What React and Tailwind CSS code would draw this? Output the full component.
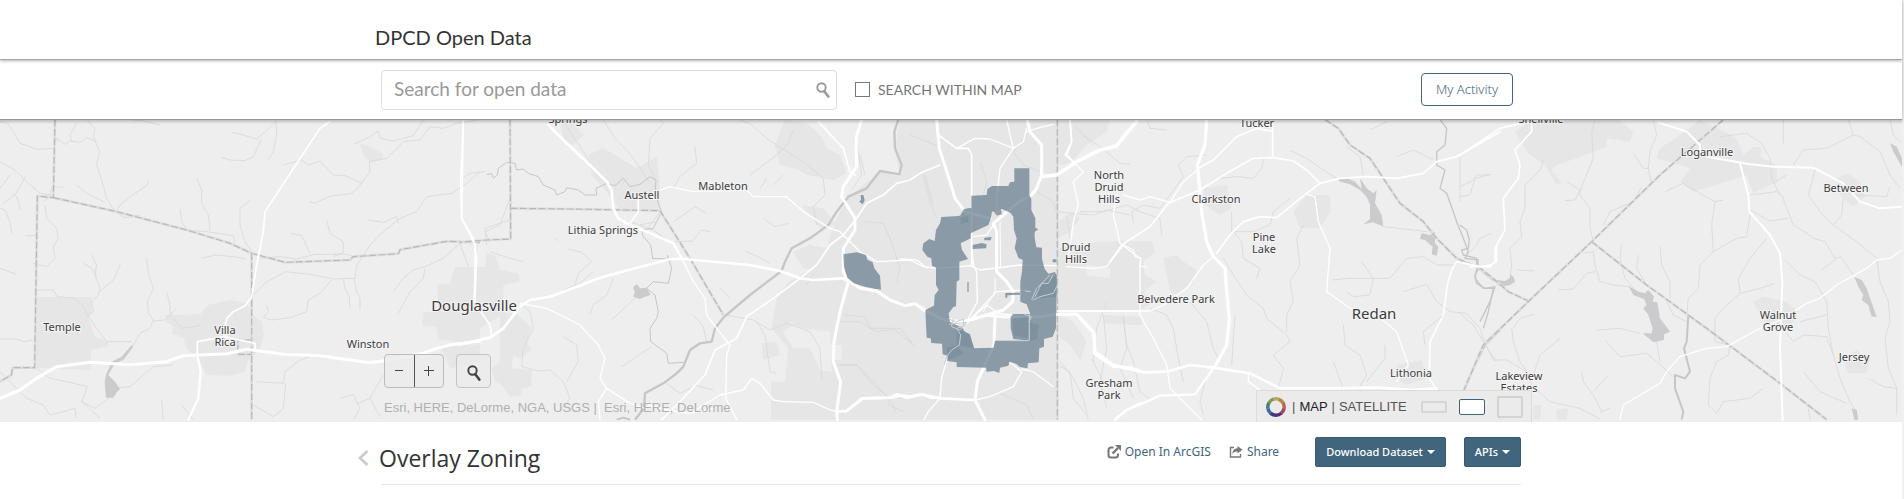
import React from "react";

const URBAN = "#e6e6e6";

/* Each sheet of the base map is drawn on a grid of thirds of a pixel, starting at x. */
const sheets = [
  {
    x: 0,
    urban: [
      "112,546 275,546 275,590 265,610 285,665 325,680 325,695 272,705 272,765 108,758",
      "495,600 600,598 625,570 690,555 740,565 760,600 785,620 792,660 780,700 740,745 735,770 690,782 620,780 600,740 560,700 550,670 515,655 520,635 500,620",
      "1365,456 1440,456 1440,690 1315,672 1308,635 1268,632 1268,592 1315,588 1312,508 1350,505",
      "1078,85 1110,95 1150,118 1145,135 1110,142 1090,120",
      "1320,690 1440,690 1440,740 1350,760",
    ],
    streams: [
      "0,20 20,22 40,50 60,85 90,95 110,103 160,100 170,70 195,88 210,78 240,82 260,68 290,80",
      "260,14 285,40 280,65 298,110 290,150 305,195 320,250 345,290 375,308 420,300",
      "350,285 365,265 405,235 440,212 445,195", "230,210 260,235 315,262", "215,80 210,60 230,25",
      "0,140 40,162 60,180 85,205 120,235 150,240", "0,220 30,180", "0,280 15,285 30,320 35,355", "35,235 50,245 62,285", "75,185 60,215 45,240 10,265",
      "390,14 430,18 480,30", "695,52 730,60 770,72 790,55 830,18", "665,128 690,135 735,137 760,125 785,72", "805,135 820,110 830,60 828,14",
      "850,150 905,135 925,150 960,138 1000,180 1035,182 1085,205 1110,170 1108,140 1160,130 1210,80 1260,75 1290,35 1330,40 1370,25 1440,14",
      "930,260 945,265 985,245 1055,235 1085,205", "1060,88 1105,68 1135,48 1140,70 1180,78 1240,62 1270,14", "1440,170 1400,205 1355,235 1280,245 1250,290 1200,310 1150,350 1110,390 1095,415",
      "1105,315 1150,322 1190,305 1195,325", "980,315 990,355 1030,380 1030,412 1000,425", "870,355 905,362 930,415",
      "590,190 605,225 605,265 625,300 630,345", "540,282 545,320 560,345 620,350 700,362 705,385", "750,255 720,280 720,330 735,380 755,410", "605,430 645,420 700,425 740,432",
      "135,270 140,310 170,340 175,370 160,395 165,430 140,455 100,445", "130,260 150,245 155,215 190,217", "75,362 110,362", "0,460 50,478",
      "105,525 160,525 172,545 225,550 250,575 265,605 290,640 320,680 395,680", "275,420 290,450 285,480 300,520 295,540 275,560 280,590 260,605", "300,530 340,495 362,445", "250,445 275,460 290,485",
      "440,430 445,475 460,520 442,560 445,595 460,615 450,640 420,655 400,690", "460,618 495,615 530,580", "500,530 510,570 510,600 545,640 600,632",
      "760,540 800,500 830,485 855,470 930,478 1000,492 1065,490 1070,450 1095,415", "995,495 960,535 925,555 920,590 870,608 815,615 790,608 805,590 800,570", "1030,492 1035,520 1048,545 1050,580", "1062,490 1070,530 1080,550 1080,583",
      "1180,530 1210,490 1240,465 1275,455 1330,430 1380,385 1405,455", "1275,460 1270,490 1230,530 1195,595", "780,430 840,425 890,432 945,418 1040,418 1060,425",
      "0,672 50,672 70,680 100,675", "0,770 40,810 80,850 130,870 150,900 190,890 225,880 228,910", "110,760 150,790 200,800 262,815 245,860 285,880 325,850 340,800", "355,818 390,815 430,780 460,755 520,750", "245,860 300,910",
      "770,800 850,805 855,770 900,735 930,725", "760,870 820,905 850,880 857,805", "485,855 490,914", "545,870 580,914", "1020,850 1060,838 1072,865 1110,850 1150,780", "1060,914 1080,880 1072,865", "1110,850 1140,905",
    ],
    water: ["395,690 400,695 370,735 345,745 325,780 345,800 360,822 350,832 340,848 318,848 314,800 318,780 335,740 365,725"],
    borders: [
      "165,14 160,248 112,243 104,758 38,758 34,780 0,800",
      "160,248 350,290 560,345 690,385 755,415 855,442 1050,435 1060,425 1195,416 1200,404 1340,379 1440,382",
      "755,415 755,700 755,914", "755,675 714,675 714,718 755,718",
    ],
    roads: [
      [5, "990,20 960,40 795,290 790,350 770,450 755,545 735,572 700,590 680,610 672,650 680,668"],
      [5, "592,720 592,680 672,665 765,685 765,705"],
      [9, "0,850 60,825 110,790 170,755 270,742 390,749 500,740 550,722 680,716 740,703 850,718 960,722 1110,743 1170,735 1270,715 1310,700 1350,690 1440,678"],
      [7, "592,720 602,770 595,850 565,914"],
      [5, "1390,14 1382,200 1385,310 1420,370 1430,430 1425,560"],
    ],
  },
  {
    x: 460,
    urban: [
      "0,456 75,456 80,415 105,420 120,465 175,475 180,500 130,510 130,560 140,590 60,640 0,650",
      "120,590 175,600 215,640 200,680 215,705 180,730 160,720 155,760 215,765 215,815 185,820 185,840 150,845 125,810 105,800 95,760 120,740",
      "330,14 370,60 340,90 310,75 300,14", "385,120 430,100 475,125 530,160 590,125 600,215 600,285 480,285 440,230 395,180",
      "945,90 975,14 1040,25 1080,60 1100,100 1140,120 1160,175 1120,195 1040,180 1020,165 960,150",
      "1320,14 1440,14 1440,914 933,914 933,800 975,800 985,700 935,640 950,550 985,500 1060,460 1100,400 1125,320 1165,245 1260,170 1320,185 1305,100",
      "1000,410 1050,390 1110,400 1080,470 1030,460", "1025,270 1090,280 1130,330 1080,340", "905,685 950,680 960,720 910,735",
    ],
    holes: ["1030,640 1110,650 1115,770 1080,765 1050,700 1000,700 970,650 1000,630", "1110,690 1145,690 1145,735 1110,735"],
    streams: [
      "310,20 370,110 390,145", "430,14 465,70 505,110 540,160 570,205", "600,14 610,25 570,70 565,150 590,200", "705,95 710,145 660,185 640,220", "0,195 30,175 75,170",
      "150,250 120,330 75,350 90,380", "285,370 295,378", "325,402 365,412 395,440 355,475 345,510", "310,525 360,505 400,470", "460,490 440,540 400,570 390,598", "455,615 530,545 520,520",
      "635,385 580,345 510,320", "700,375 725,345 750,350", "640,320 705,275 740,295", "645,380 700,378", "175,560 210,590 220,640 190,700 185,755 235,768 270,765 310,800 330,850 300,890",
      "310,665 350,690 355,740 320,800", "485,755 575,695", "700,600 730,635 740,680", "780,520 810,550", "860,410 905,430 930,445", "835,14 870,25 920,70 950,90 980,110 1030,140 1090,190 1095,240 1060,275 1070,330",
      "870,180 950,120 985,85 1000,45", "900,220 920,190", "940,210 970,180", "910,310 945,335 985,325", "1180,70 1195,110 1205,180 1175,225", "1215,320 1270,325 1290,370 1320,460 1310,500",
      "795,600 880,615 930,645 980,625 1050,650 1080,700 1085,790", "890,620 915,660 930,770 950,775", "1150,600 1215,605 1230,640 1300,640 1360,690", "1130,750 1190,750 1240,810 1290,850 1285,870 1330,890", "620,805 660,835 710,812 760,825", "90,410 150,430 190,440", "590,320 540,330 560,345 600,290", "1395,180 1420,270",
      "80,390 75,340 150,315", "1040,510 1060,475",
    ],
    rivers: [
      [3, "80,178 95,176 100,190 112,180 115,160 140,142 165,145 170,165 190,162 205,175 235,185 250,210 285,225 290,240 315,230 320,218 355,225 375,240 410,240 408,220 440,205 465,212 490,190 510,215 540,208 570,185 588,195 585,230 595,265 605,290 580,340 545,345 550,365 572,390 578,430 625,432 622,420 635,460 625,505 580,500 560,520 585,540 595,590 590,610 570,640 572,680 600,700 620,715 625,745 670,742"],
      [7, "1315,14 1303,50 1305,100 1325,150 1318,178 1260,168 1220,220 1165,245 1130,290 1105,330 1050,370 995,400 975,440 965,468 870,540 790,608 765,640 755,680 720,685 690,705 670,755 650,775 610,805 555,835 552,880 525,914", ],
      [6, "470,914 490,908 510,914"],
    ],
    water: ["520,515 530,508 540,520 560,518 572,540 555,545 540,552 520,545 525,530"],
    borders: ["150,14 152,372 80,375 0,382", "152,280 330,282 600,287 690,430 790,600"],
    roads: [
      [5, "10,14 5,310 45,390 45,470 42,560 90,630 95,665"],
      [8, "265,30 310,75 390,150 440,200 455,225 460,280 475,310 510,330 560,350 640,385 665,430"],
      [4, "665,430 700,500 735,550 740,600 770,640 810,690 800,720 797,850 830,914"],
      [8, "0,688 90,668 130,640 180,575 210,555 270,545 430,485 630,432 670,432 870,450 960,468 1020,490 1060,495 1150,490"],
      [4, "600,225 630,215 700,230 860,225 880,245 980,245 1030,290 1110,340 1140,350 1200,410 1250,440 1350,435 1390,455 1440,460"],
      [5, "510,325 535,290 535,245"],
      [4, "180,565 260,580 360,630 415,690 435,730 420,790 440,820 510,865 555,880 570,870 620,885 690,895 760,880"],
      [4, "440,820 415,860 420,914"],
      [5, "605,914 650,870 735,780 765,705 830,670 860,605 940,550 1020,490 1070,450 1110,390 1150,360 1190,310 1220,265 1270,240 1310,205 1350,195 1380,175 1440,150"],
      [4, "690,895 780,840 850,825 875,790 900,805 940,855 970,860 1060,862 1110,885 1130,890"],
      [5, "1075,20 1150,100 1170,170 1185,180"],
      [9, "1205,14 1188,70 1190,155 1150,215 1145,245 1185,310 1185,345 1150,400 1150,470 1165,500 1140,590 1122,680 1120,740 1142,800 1130,890 1132,914"],
      [9, "1150,490 1200,520 1250,528 1290,555 1335,572 1365,566 1400,590"],
      [8, "1130,890 1160,888 1205,850 1290,848 1310,838 1340,848 1390,838 1410,848 1440,848"],
    ],
  },
  {
    x: 840,
    urban: ["300,14 652,14 652,914 300,914", "652,14 810,14 800,50 740,90 700,135 670,150 652,150", "652,400 780,380 900,380 900,588 652,588", "652,320 700,290 720,310 690,350 652,370", "652,600 700,620 740,680 720,735 690,690 652,660"],
    holes: ["740,450 810,460 810,490 740,480"],
    streams: [
      "60,120 75,180", "250,180 270,260 290,310", "210,60 300,95", "560,60 520,110 550,150 600,170", "652,290 700,295 760,300 800,285 870,300", "0,620 60,620 110,650 180,640 220,690", "0,750 50,750 120,820 160,870 165,890", "590,230 640,260 652,300", "680,300 690,370 720,440", "790,600 800,700 780,800 800,880", "850,600 860,700 840,760 880,850", "652,750 690,770 700,850 740,900", "420,140 440,200 430,240", "470,830 560,870 580,914", "700,30 760,90",
    ],
    borders: ["652,14 652,914"],
    roads: [
      [9, "290,14 298,100 330,200 345,250 375,290 450,310"],
      [5, "295,60 350,100 385,100 395,120 395,450"],
      [4, "350,100 405,70 450,72 520,100 550,80 560,40"],
      [4, "500,14 510,60 520,100 480,160 470,250 470,300"],
      [9, "562,14 570,50 605,90 605,180 590,220 575,240 530,265 490,300 460,325 470,350 470,470 500,500 520,530 518,560 490,585 440,600 400,612"],
      [11, "605,185 650,180 710,140 780,105 830,93 855,60 890,20"],
      [4, "560,50 590,40 640,28"], [4, "690,14 695,80 675,120 700,140"], [4, "700,140 730,170 700,200 715,270 700,320 690,400 680,440"],
      [4, "395,390 400,450 410,470 412,560 380,620"], [3, "480,320 482,460"], [4, "400,365 440,360 460,330"],
      [4, "180,432 230,435 260,458 330,458 390,452 420,465 540,450 650,452"], [4, "330,610 380,625 470,530 560,525"], [4, "380,625 440,570 475,595 515,600"],
      [3, "465,490 465,530 430,590"],
      [9, "230,570 255,585 300,610 350,625 400,612 440,600 490,605 600,605 655,598 710,598 760,650 765,710 820,750 860,760 900,770"],
      [4, "652,588 900,588"],
      [9, "465,600 462,690 430,760 412,800 405,855 435,914"],
      [8, "0,888 20,888 70,850 160,848 180,840 210,845 245,838 300,850 400,855"],
      [4, "360,670 320,735 305,790 300,850 265,890 252,914"], [4, "405,855 450,845 520,815 545,770 510,742"], [4, "545,762 580,770 640,815"],
      [7, "825,914 860,885 900,865"], [4, "830,240 820,300 840,385 900,430"], [4, "680,455 760,460 800,455 850,390"],
    ],
  },
  {
    x: 1060,
    urban: ["150,380 275,378 285,410 250,440 255,480 290,500 250,530 280,560 240,588 150,588", "310,430 350,420 370,440 410,465 400,500 350,540 330,530", "700,290 740,240 810,240 812,290 780,340 720,340", "430,220 500,210 515,280 480,300 435,270", "130,600 245,605 245,630 130,625", "1010,750 1085,735 1100,790 1040,810 1010,790", "0,520 150,520 150,588 0,588"],
    streams: [
      "260,14 270,40 320,45", "70,60 120,95 150,120 180,145 210,148", "220,320 215,290 250,270 300,280 330,240 370,185 355,150 380,125 440,120", "60,290 130,290 200,270 240,290 300,310 305,360", "480,190 530,185 580,190 605,160 612,130", "515,290 515,350 580,350 630,330 640,290 690,250",
      "490,430 520,480 560,540 610,580 620,610 680,660 690,680 640,720 670,760 655,820", "520,350 545,380 550,430 600,460 590,490", "730,330 710,370 720,450 690,500 700,560 680,600 680,650", "800,880 850,820 820,740", "850,630 855,690 900,720 920,780 890,830", "920,800 975,730 975,690",
      "815,495 870,490 920,490 990,490 1040,430 1090,425 1130,450 1190,450", "860,530 880,545 930,540 940,490 905,440", "1030,530 1100,508 1130,560 1170,590 1220,595 1260,640 1275,685", "690,105 740,130 790,165 830,190", "860,95 900,125 910,180", "970,335 1060,345 1100,350", "1010,125 1060,105 1120,135",
      "930,45 980,20", "1200,215 1240,195 1250,180 1290,180", "1220,420 1250,390 1260,370 1295,355", "1150,600 1090,650 1095,690", "100,740 110,640 140,560", "190,610 200,690 220,740 240,830 280,860", "270,580 320,600 340,640 355,730 370,800", "390,560 440,620 460,700 480,740", "525,600 515,750", "0,740 40,790 70,850 85,914", "95,730 130,800 120,850", "440,780 420,860 430,900", "1275,690 1310,740",
    ],
    rivers: [[4, "1140,14 1160,40 1155,90 1130,110 1130,150 1155,165 1140,220 1160,235 1180,290 1190,320 1210,370 1225,410 1215,430 1255,435 1245,490 1270,520 1300,520 1285,590 1270,640"]],
    water: [
      "830,190 860,188 885,200 905,222 900,190 920,220 940,235 950,225 945,265 965,300 970,335 940,322 910,328 930,312 930,270 920,245 900,225 870,208 840,200",
      "1085,355 1110,360 1125,350 1125,385 1135,395 1130,422 1115,418 1118,395 1095,375 1080,372", "1305,500 1320,495 1320,515",
    ],
    borders: ["795,14 835,40 870,90 930,130 970,190 1020,265 1090,320 1130,370 1190,430 1250,455 1300,495 1320,505", "1320,645 1275,690 1245,750 1212,825"],
    roads: [
      [10, "440,14 435,90 412,150 425,290 440,380 460,425 495,460 500,530 508,610 500,690 465,755"],
      [8, "0,598 50,598 105,660 102,715 160,755 215,758 250,772 320,770 390,750 460,758 570,775 660,820 800,820 950,818 1060,825 1130,820"],
      [7, "460,760 405,838 300,842 260,860 200,885 165,914"],
      [5, "415,160 460,135 530,65 590,40 640,50"], [5, "638,14 638,128"],
      [5, "150,440 185,390 270,335 325,265 420,225 500,175 580,130 640,128 700,138 740,165 780,205"],
      [4, "190,240 240,255 270,245 330,262 370,200 412,165"],
      [5, "470,415 510,360 550,320 600,305 650,308 720,250 780,205 840,190 920,185 1010,190 1090,175 1130,140 1190,125 1320,50"],
      [4, "740,238 765,245 775,320 810,400 800,530 870,580 950,600 1010,650 1045,750 1010,800"],
      [4, "455,430 430,450 380,520 310,570 270,588 0,588"], [4, "240,440 240,600 280,670 320,750 330,820 370,860 425,914"], [4, "190,390 220,405 225,425 243,430 240,455 258,455"],
      [5, "1260,455 1190,440 1175,465 1162,510 1150,600 1110,680 1108,790 1130,825"], [4, "1190,440 1260,455 1290,450 1310,440 1310,390 1320,370"],
      [4, "565,778 565,800 600,825"], [5, "30,14 35,80 20,120 40,140"],
    ],
  },
  {
    x: 1460,
    urban: ["165,50 215,14 475,14 520,50 510,80 440,70 440,95 350,130 290,150 275,165 305,205 290,210 255,150 205,115", "600,100 660,60 720,14 775,40 830,70 850,120 880,95 905,100 900,125 950,150 950,200 880,235 860,180 750,215 700,230 660,200 690,160 590,130", "1130,190 1160,175 1200,200 1215,245 1180,275 1140,240", "880,560 910,545 980,560 1015,590 1000,620 960,645 910,620", "1150,730 1190,705 1230,735 1220,775 1165,775", "220,870 245,870 240,914 220,914", "290,885 325,880 320,914 290,914"],
    streams: [
      "405,14 395,50 400,130 365,215 360,240 390,280 390,340 400,380", "315,257 345,255 360,225 320,200", "580,14 590,60 570,110 565,160 575,210", "520,115 550,160 565,160", "430,330 450,290 520,260 545,215", "250,135 240,165 195,210 195,280 180,320 185,365 150,400 155,450 150,490",
      "170,465 225,468", "0,245 30,240 45,190 95,178", "0,130 0,260", "370,415 400,410 405,450 420,500 460,510 505,515", "295,525 340,522 380,475 405,470", "485,390 480,430 495,490 540,540", "535,420 530,460 560,510 580,530", "600,395 605,450 630,500 630,550", "620,560 640,600 680,620",
      "615,230 670,205 720,235 765,260 755,330 760,410 720,450 715,520 685,550 680,600", "765,260 790,255", "760,410 830,370 860,365 870,300", "870,285 930,318 985,310", "870,240 950,230 965,240 1000,330 1040,355 1060,370 1095,380 1125,430 1145,425", "1145,430 1180,480", "1065,165 1045,240 1080,290 1120,330 1190,380 1250,430 1260,500 1285,560 1290,620 1275,670 1285,760 1310,820 1310,900",
      "780,65 860,55 905,85 930,130 935,190 960,240", "940,205 980,180", "970,14 970,85", "1000,150 1030,105 1100,100 1180,60 1200,65 1260,110 1290,180 1320,220", "1165,14 1180,60", "1180,240 1280,245 1290,215", "1120,330 1145,300 1150,250", "975,435 1020,480 1065,500 1100,560 1105,640 1120,720", "1020,620 1100,600", "1085,465 1130,430", "970,640 1000,680 1030,660 1100,665 1120,720 1140,790 1170,860 1190,890",
      "920,370 870,430 835,490 840,535 785,585 765,610 765,680 810,690 805,720 770,740 750,790 745,870 770,895 790,860 870,850 910,820", "840,535 900,520 945,505", "410,645 480,640 540,655", "435,675 480,725 560,715 590,740 640,785", "590,680 600,740", "155,640 160,680 180,740 200,770 215,810 270,860 360,880 420,912", "160,640 180,610 220,598", "75,685 100,735 140,735 200,770", "365,770 370,800 400,840 425,890 450,880", "400,830 445,780", "0,595 40,630 70,680", "300,670 240,720 220,780", "1030,770 1080,830 1160,865", "1045,880 1050,914", "1225,790 1270,815 1310,820", "1290,14 1300,60 1320,80",
    ],
    rivers: [
      [4, "0,330 20,345 28,375 25,400 5,405 10,420 50,430 50,445 60,455 45,480 50,505 75,520 105,515 90,560 60,620"],
      [6, "685,600 680,680 672,700 690,770 675,790 645,780 645,820 670,890 665,914"],
    ],
    water: [
      "505,512 535,530 555,535 565,525 582,545 578,560 592,562 600,610 630,650 612,658 612,675 580,682 548,655 575,655 578,640 565,600 550,580 560,570 552,552 520,540",
      "110,495 135,498 150,488 152,478 162,488 165,500 150,510 125,515",
      "1183,486 1205,495 1220,520 1230,550 1250,605 1235,605 1225,570 1205,555 1210,540 1195,515",
      "1290,85 1310,95 1326,130 1326,155 1300,110", "1175,880 1190,885 1195,914 1183,914",
    ],
    borders: ["0,440 55,455 105,495 145,530 205,558", "790,14 600,180 395,380 210,555 70,690 12,825", "395,380 560,510 740,640 960,805 1100,914"],
    roads: [
      [5, "0,120 120,40 180,25 215,22 215,50 165,105 180,150 175,190 130,250 135,345 105,400 105,440 90,455 30,455"],
      [6, "595,22 680,50 720,90 720,110 740,125 870,148 940,155 1060,158 1150,205 1200,260 1260,280 1326,275"],
      [6, "840,145 865,240 868,290 930,360 960,415 967,500 960,700 968,914"],
      [4, "480,914 490,870 600,805 620,770 660,725 740,700 800,695 890,645 960,615 1040,565 1080,550 1130,510 1220,460 1250,435 1290,430 1326,405"],
    ],
  },
];

const overlay =
  "M523,160 568,160 568,240 574,252 574,285 586,310 586,338 595,343 584,350 584,368 589,397 606,398 606,432 614,462 625,476 645,471 650,482 648,640 638,665 612,672 612,695 598,700 596,742 564,745 562,760 540,756 528,746 508,740 505,752 480,758 478,774 462,768 440,770 438,758 350,756 350,742 322,738 322,722 308,718 306,686 274,684 272,670 260,668 256,585 282,572 284,540 296,525 288,510 288,458 276,452 274,430 262,425 247,405 250,385 268,372 284,378 288,345 300,325 304,306 345,304 360,302 372,282 394,278 394,242 440,240 442,222 456,213 505,213 510,202 523,200Z " +
  "M456,290 486,282 512,294 520,305 522,345 530,370 524,400 536,430 548,434 546,470 541,500 541,560 560,568 570,595 568,677 465,677 460,698 402,700 390,658 375,652 368,640 330,620 326,595 340,576 348,574 350,500 358,495 358,440 384,432 366,405 362,385 392,370 392,355 445,330 452,312Z " +
  "M512,605 520,597 568,597 568,677 520,672 512,640Z " +
  "M10,418 50,412 78,420 82,434 98,442 103,460 120,482 123,524 108,522 75,515 42,505 22,488 12,455Z " +
  "M62,240 70,240 74,256 68,268 58,260 63,254Z " +
  "M398,390 425,384 440,388 438,400 398,402Z M433,368 455,366 452,376 433,376Z M382,502 386,502 386,530 382,530Z M496,534 540,533 540,539 502,541 502,548 496,548Z M638,433 649,433 649,442 638,442Z";

const overlayDark = "M590,515 650,480 650,545 590,550Z M516,612 566,606 564,668 522,662Z M350,640 385,655 402,698 350,690Z M568,620 596,630 590,672 568,680Z M320,700 350,690 370,715 325,735Z M362,308 384,304 386,320 362,328Z M460,288 482,282 486,298 470,302Z";

const overlayTrails = [
  "325,610 345,622 370,612 372,632 350,640 362,660 358,690 335,705 322,722 312,750", "328,628 380,622 360,645 335,635 340,610", "575,555 590,520 610,500 630,480", "580,555 600,545 640,535 650,515", "585,545 605,505 625,505 640,478", "556,528 572,530", "568,597 568,677 500,677", "552,597 574,606 566,622",
];

const places = [
  ["Temple", 62, 331], ["Villa", 225, 334], ["Rica", 225, 346], ["Winston", 368, 348], ["Springs", 568, 123],
  ["Austell", 642, 199], ["Mableton", 723, 190], ["Lithia Springs", 603, 234], ["North", 1109, 179], ["Druid", 1109, 191],
  ["Hills", 1109, 203], ["Druid", 1076, 251], ["Hills", 1076, 263], ["Gresham", 1109, 387], ["Park", 1109, 399],
  ["Tucker", 1257, 127], ["Clarkston", 1216, 203], ["Pine", 1264, 241], ["Lake", 1264, 253], ["Belvedere Park", 1176, 303],
  ["Lithonia", 1411, 377], ["Shellville", 1541, 123], ["Loganville", 1707, 156], ["Between", 1846, 192], ["Walnut", 1778, 319],
  ["Grove", 1778, 331], ["Jersey", 1854, 361], ["Lakeview", 1519, 380], ["Estates", 1519, 392],
];

const cities = [["Douglasville", 474, 311], ["Redan", 1374, 319]];

function MapDrawing() {
  return (
    <svg className="block h-[302px] w-full" viewBox="0 120 1902 302" preserveAspectRatio="xMidYMid slice" aria-label="Overlay zoning map" role="img">
      <rect x="0" y="0" width="1902" height="422" fill="#eeeeee" />
      <g fill="none" strokeLinejoin="round">
        {sheets.map((s) => (
          <g key={s.x} transform={`translate(${s.x} 115) scale(0.33333)`}>
            {s.urban.map((p) => <polygon key={p} points={p} fill={URBAN} />)}
            {(s.holes || []).map((p) => <polygon key={p} points={p} fill="#eeeeee" />)}
          </g>
        ))}
        {sheets.map((s) => (
          <g key={s.x} transform={`translate(${s.x} 115) scale(0.33333)`}>
            {s.streams.map((p) => <polyline key={p} points={p} stroke="#d9d9d9" strokeWidth="2.5" />)}
            {(s.rivers || []).map(([w, p]) => <polyline key={p} points={p} stroke="#c6c6c6" strokeWidth={w} />)}
            {(s.water || []).map((p) => <polygon key={p} points={p} fill="#cbcbcd" />)}
            {s.borders.map((p) => (
              <g key={p}>
                <polyline points={p} stroke="#dedede" strokeWidth="8" />
                <polyline points={p} stroke="#b8b8b8" strokeWidth="3.5" strokeDasharray="20 8" />
              </g>
            ))}
          </g>
        ))}
        {sheets.map((s) => (
          <g key={s.x} transform={`translate(${s.x} 115) scale(0.33333)`} strokeLinecap="round">
            {s.roads.map(([w, p]) => <polyline key={p} points={p} stroke="#ffffff" strokeWidth={w} />)}
          </g>
        ))}
        <g transform="translate(840 115) scale(0.33333)">
          <path d={overlay} fill="#667d8f" fillOpacity="0.72" fillRule="evenodd" />
          <path d={overlayDark} fill="#7a8f9e" fillOpacity="0.8" />
          {overlayTrails.map((p) => <polyline key={p} points={p} stroke="#c6cdd2" strokeWidth="3" />)}
        </g>
      </g>
      <g className="font-['Noto_Sans',sans-serif]" fill="#3c3c3c" stroke="#f4f4f4" strokeWidth="2" paintOrder="stroke" textAnchor="middle">
        {places.map(([name, x, y]) => <text key={name + x} x={x} y={y} className="text-[11px]">{name}</text>)}
        {cities.map(([name, x, y]) => <text key={name} x={x} y={y} className="text-[15px]">{name}</text>)}
      </g>
    </svg>
  );
}

function Magnifier({ className }) {
  return (
    <svg className={className} viewBox="0 0 14 16" fill="none" stroke="currentColor" aria-hidden="true">
      <circle cx="5.5" cy="5.5" r="4.2" strokeWidth="1.9" />
      <path d="M8.3 9.2 12.3 14.6" strokeWidth="2.6" strokeLinecap="round" />
    </svg>
  );
}

function Caret() {
  return (
    <svg className="h-1 w-2" viewBox="0 0 8 4" fill="currentColor" aria-hidden="true">
      <path d="M0 0h8L4 4z" />
    </svg>
  );
}

function Ring() {
  const colors = ["#b3ac5c", "#b08a4b", "#b06a52", "#a04a5c", "#5a2d6e", "#3d3a7a", "#3f6ba3", "#4b7d78", "#7f9a55"];
  return (
    <svg className="size-5" viewBox="-10 -10 20 20" fill="none" aria-hidden="true">
      {colors.map((c, i) => (
        <circle key={c} r="8.2" stroke={c} strokeWidth="3.5" pathLength="90" strokeDasharray="10.5 79.5" transform={`rotate(${i * 40 - 110})`} />
      ))}
    </svg>
  );
}

export default function App() {
  return (
    <div className="bg-[#f0f0f0] pr-0.5 font-['Noto_Sans',sans-serif] text-[#333]">
      <header className="relative z-10 border-b border-[#a8a8a8] bg-white shadow-[0_1px_3px_rgba(0,0,0,0.3)]">
        <div className="mx-auto flex h-[59px] max-w-[1170px] items-end px-[9px] pb-2">
          <h1 className="font-[Lato,sans-serif] text-xl leading-7">DPCD Open Data</h1>
        </div>
      </header>

      <div className="border-b border-[#979797] bg-white shadow-[0_1px_3px_rgba(0,0,0,0.3)]">
        <div className="mx-auto flex h-[59px] max-w-[1170px] items-center px-[15px] font-[Lato,sans-serif]">
          <form className="flex h-10 w-[456px] items-center rounded border border-[#ddd] pr-1.5 pl-3">
            <input type="text" aria-label="Search for open data" placeholder="Search for open data" className="min-w-0 flex-1 bg-transparent text-[19px] outline-none placeholder:text-[#999]" />
            <button type="button" aria-label="Search" className="text-[#999]">
              <Magnifier className="h-4 w-3.5" />
            </button>
          </form>
          <label className="ml-[18px] flex items-center gap-2 text-sm text-[#757575]">
            <input type="checkbox" className="size-[15px] appearance-none border border-[#777] bg-white checked:bg-[#777]" />
            SEARCH WITHIN MAP
          </label>
          <button type="button" className="mr-2 ml-auto h-[33px] w-[92px] rounded border border-[#41657d] font-['Noto_Sans',sans-serif] text-[13px] font-light text-[#41657d]">
            My Activity
          </button>
        </div>
      </div>

      <section className="relative overflow-hidden bg-[#eee]">
        <MapDrawing />
        <div className="absolute inset-x-0 top-0 h-1 bg-linear-to-b from-black/20 to-transparent" />
        <div className="absolute inset-x-0 bottom-0">
          <div className="mx-auto flex max-w-[1170px] items-end justify-between pr-1 pl-[18px]">
            <div className="flex flex-col gap-2.5 pb-1">
              <div className="flex gap-3">
                <div className="flex h-[34px] w-[60px] rounded border border-[#bbb] bg-[#ebebeb]/80 text-[#444]">
                  <button type="button" aria-label="Zoom out" className="grid flex-1 place-items-center border-r border-[#555]">
                    <svg className="size-3" viewBox="0 0 12 12" stroke="currentColor" aria-hidden="true"><path d="M2 5.5h8" /></svg>
                  </button>
                  <button type="button" aria-label="Zoom in" className="grid flex-1 place-items-center">
                    <svg className="size-3" viewBox="0 0 12 12" stroke="currentColor" aria-hidden="true"><path d="M1 5.5h10M5.5 1v10" /></svg>
                  </button>
                </div>
                <button type="button" aria-label="Search map" className="grid h-[34px] w-[35px] place-items-center rounded border border-[#c4c4c4] bg-[#ebebeb]/80 pt-1 text-[#444]">
                  <Magnifier className="h-4 w-3.5" />
                </button>
              </div>
              <p className="font-['Liberation_Sans',sans-serif] text-[13px] leading-5 whitespace-pre text-[#b0b0b0]">
                {"Esri, HERE, DeLorme, NGA, USGS |  Esri, HERE, DeLorme"}
              </p>
            </div>
            <div className="flex h-8 w-[276px] items-center border border-b-0 border-[#dcdcdc] bg-[#ebebeb] pl-[9px] font-['Liberation_Sans',sans-serif] text-[13px] text-[#555]">
              <Ring />
              <span className="ml-1.5">|</span>
              <button type="button" className="ml-1 text-[#222]">MAP</button>
              <span className="mx-1">|</span>
              <button type="button">SATELLITE</button>
              <button type="button" aria-label="Small map" className="ml-3.5 h-3 w-[26px] rounded-xs border-2 border-[#d5d5d5]" />
              <button type="button" aria-label="Medium map" className="ml-3 h-4 w-[26px] rounded-xs border border-[#41657d] bg-white" />
              <button type="button" aria-label="Large map" className="ml-3 h-[22px] w-[26px] rounded-xs border-2 border-[#d2d2d2]" />
            </div>
          </div>
        </div>
      </section>

      <main className="bg-white pb-3.5">
        <div className="mx-auto max-w-[1170px] px-[15px]">
          <div className="-ml-6 flex h-[62px] items-center">
            <a href="#back" aria-label="Back" className="mt-2.5 text-[#ccc]">
              <svg className="h-4 w-3" viewBox="0 0 12 16" fill="none" stroke="currentColor" strokeWidth="2.8" aria-hidden="true"><path d="M10.5 1 3 8l7.500 7" /></svg>
            </a>
            <h2 className="mt-2.5 ml-2.5 font-['Open_Sans',sans-serif] text-[23px] leading-8">Overlay Zoning</h2>
            <div className="mr-5 ml-auto flex gap-[18px] pb-0.5 text-xs text-[#41657d]">
              <a href="#arcgis" className="flex items-center gap-1">
                <svg className="size-3.5 text-[#777]" viewBox="0 0 14 14" fill="none" stroke="currentColor" strokeWidth="2" aria-hidden="true">
                  <path d="M6.500 2.500H4a2.500 2.500 0 0 0-2.500 2.500v5A2.500 2.500 0 0 0 4 12.500h4.500a2.500 2.500 0 0 0 2.500-2.500V8.500" />
                  <path d="M5.500 8.500 11 3" strokeWidth="2.400" />
                  <path d="M8 0h6v6z" fill="currentColor" stroke="none" />
                </svg>
                Open In ArcGIS
              </a>
              <a href="#share" className="flex items-center gap-1">
                <svg className="size-3.5 text-[#777]" viewBox="0 0 14 14" fill="none" stroke="currentColor" aria-hidden="true">
                  <path d="M5 2.500H1.500v9.500h10V9" strokeWidth="1.400" />
                  <path d="M8.500 1 13.500 4.800 8.500 8.500V6.500C6 6.300 4.500 7 3.300 9.500 3.300 5.500 5 3.400 8.500 3.200z" fill="currentColor" stroke="none" />
                </svg>
                Share
              </a>
            </div>
            <div className="ml-4 flex gap-[18px] pb-0.5 text-[11px] font-medium text-white">
              <button type="button" className="flex h-[30px] items-center gap-1 rounded-xs border border-[#375a70] bg-[#41657d] px-2.5">Download Dataset <Caret /></button>
              <button type="button" className="flex h-[30px] items-center gap-1 rounded-xs border border-[#375a70] bg-[#41657d] px-2.5">APIs <Caret /></button>
            </div>
          </div>
          <hr className="border-[#e8e8e8]" />
        </div>
      </main>
    </div>
  );
}
